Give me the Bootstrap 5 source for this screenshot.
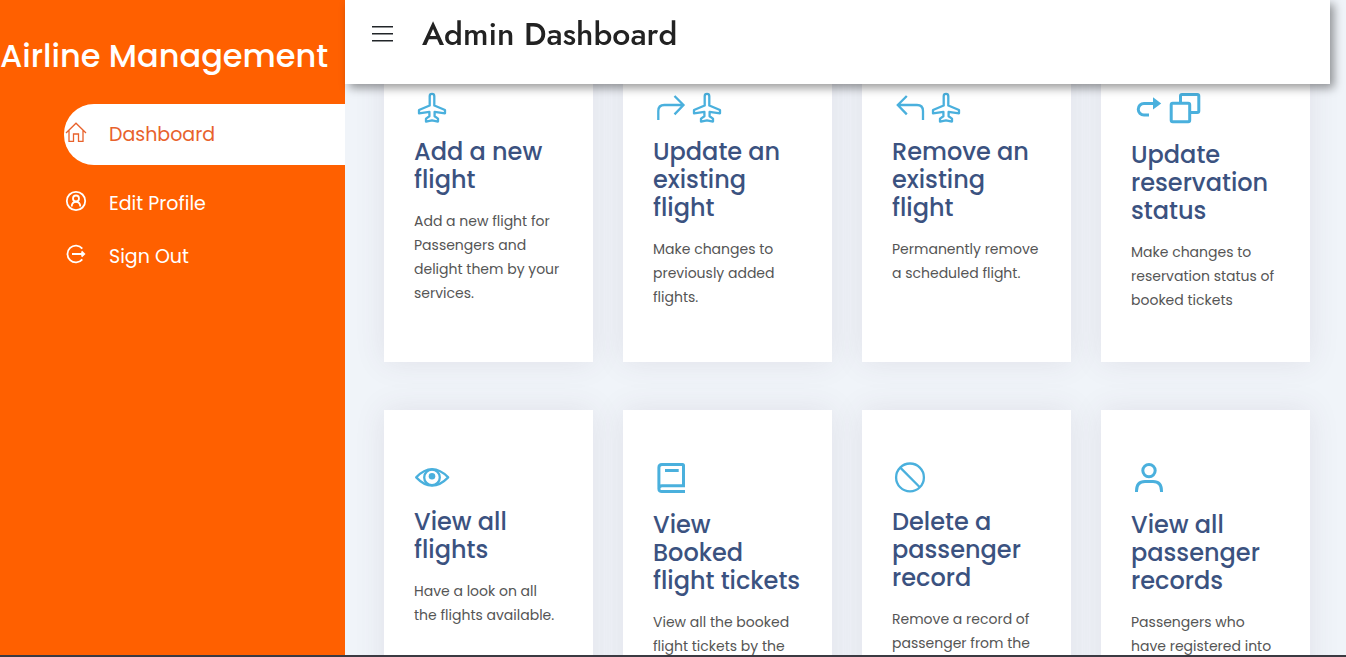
<!DOCTYPE html>
<html lang="en">
<head>
<meta charset="utf-8">
<meta name="viewport" content="width=device-width, initial-scale=1">
<title>Admin Dashboard</title>
<link rel="stylesheet" href="https://cdn.jsdelivr.net/npm/bootstrap@5.3.0/dist/css/bootstrap.min.css">
<style>
  :root { --brand: #ff6000; --side: 345px; }
  body { font-family: Poppins, Inter, "Open Sans", sans-serif; background: #f0f4f9; }
  svg { fill: none; stroke: currentColor; display: block; flex: none; }
  .sidebar { width: var(--side); background: var(--brand); padding-top: 32px; }
  .brand-name { font-size: 32px; line-height: 48px; font-weight: 500; white-space: nowrap; margin-bottom: 24px; }
  .side-menu { padding-left: 64px; }
  .side-menu .nav-link { color: #fff; font-size: 19px; line-height: 29px; padding: 12px 0 12px 1px; gap: 22px; }
  .side-menu .nav-link svg { margin-top: -6px; }
  .side-menu .nav-link.active { color: #e8622c; background: #fff; border-radius: 30px 0 0 30px; padding-top: 16px; padding-bottom: 16px; margin-bottom: 12px; }
  .topbar { left: var(--side); right: 16px; height: 84px; padding: 12px 26px; gap: 29px; box-shadow: 4px 4px 9px rgba(0, 0, 0, .4); z-index: 10; }
  .topbar h1 { font-family: Jost, Lato, sans-serif; font-size: 32px; line-height: 44px; font-weight: 500; color: #222; }
  .cards { padding: 40px 36px 0 39px; }
  .cards .row { --bs-gutter-x: 30px; --bs-gutter-y: 48px; }
  .tile { background: #fff; padding: 50px 0 50px 30px; box-shadow: 0 0 29px rgba(90, 55, 90, .1); white-space: nowrap; }
  .tile-icon { color: #4ab0dd; margin-bottom: 15px; }
  .tile h2 { font-size: 24px; line-height: 28px; font-weight: 500; margin-bottom: 15px; }
  .tile h2 a { color: #3b5280; text-decoration: none; }
  .tile p { font-size: 14px; line-height: 24px; color: #555; margin: 0; }
  .window-edge { height: 2px; background: #3b3a42; z-index: 20; }
</style>
</head>
<body>
<svg width="0" height="0" class="position-absolute" aria-hidden="true">
  <symbol id="plane" viewBox="0 0 36 33"><path stroke-width="2.3" stroke-linejoin="round" d="M15.7 6.200a2.300 2.300 0 0 1 4.600 0V15.500L31 20V23.300L20.600 21.800V26.200L24 28.600V31.600L18 30.400L12 31.600V28.600L15.400 26.200V21.800L5 23.300V20L15.700 15.500Z"/></symbol>
</svg>
<div class="d-flex vh-100 overflow-hidden">
  <aside class="sidebar flex-shrink-0 text-white">
    <div class="brand-name">Airline Management</div>
    <nav class="side-menu nav flex-column">
      <a class="nav-link active d-flex align-items-center" href="#" aria-current="page">
        <svg width="22" height="22" viewBox="0 0 22 22" stroke-width="1.3"><path d="M1 12L11 2.200L21 12M4 9.500V20.300H8.500V13H13.500V20.300H18V9.500"/></svg>Dashboard</a>
      <a class="nav-link d-flex align-items-center" href="#">
        <svg width="22" height="22" viewBox="0 0 22 22" stroke-width="1.8"><circle cx="11" cy="11" r="9.200"/><circle cx="11" cy="8.500" r="3"/><path d="M6.700 16.500C6.900 13.500 8.700 11.900 11 11.900S15.100 13.500 15.300 16.500"/></svg>Edit Profile</a>
      <a class="nav-link d-flex align-items-center" href="#">
        <svg width="22" height="22" viewBox="0 0 22 22" stroke-width="1.800"><path d="M17.300 5.600A8.400 8.400 0 1 0 17.300 16.400M7 11H19M16.500 8.500L19.200 11L16.500 13.500"/></svg>Sign Out</a>
    </nav>
  </aside>
  <header class="topbar position-fixed top-0 bg-white d-flex align-items-start">
    <button class="btn border-0 p-0 mt-2" type="button" aria-label="Toggle menu">
      <svg width="22" height="28" viewBox="0 0 22 28" stroke="#222" stroke-width="1.600"><path d="M1 6.800H22M1 13.800H22M1 20.800H22"/></svg>
    </button>
    <h1 class="m-0">Admin Dashboard</h1>
  </header>
  <main class="cards flex-grow-1">
    <div class="row row-cols-4">
      <div class="col"><article class="tile h-100">
        <div class="tile-icon d-flex"><svg width="36" height="33"><use href="#plane"/></svg></div>
        <h2><a href="#">Add a new<br>flight</a></h2>
        <p>Add a new flight for<br>Passengers and<br>delight them by your<br>services.</p>
      </article></div>
      <div class="col"><article class="tile h-100">
        <div class="tile-icon d-flex"><svg width="36" height="33" viewBox="0 0 36 33" stroke-width="2.300"><path d="M5.300 30V21Q5.300 15 11.300 15H30M21.500 6L30.500 15L21.500 24.400"/></svg><svg width="36" height="33"><use href="#plane"/></svg></div>
        <h2><a href="#">Update an<br>existing<br>flight</a></h2>
        <p>Make changes to<br>previously added<br>flights.</p>
      </article></div>
      <div class="col"><article class="tile h-100">
        <div class="tile-icon d-flex"><svg width="36" height="33" viewBox="0 0 36 33" stroke-width="2.300"><path d="M31 30V21Q31 15 25 15H6M14.800 6L5.800 15L14.800 24.400"/></svg><svg width="36" height="33"><use href="#plane"/></svg></div>
        <h2><a href="#">Remove an<br>existing<br>flight</a></h2>
        <p>Permanently remove<br>a scheduled flight.</p>
      </article></div>
      <div class="col"><article class="tile h-100">
        <div class="tile-icon d-flex"><svg width="36" height="36" viewBox="0 0 36 36" stroke-width="3"><path d="M23 13.500H13A5.750 5.750 0 0 0 13 25H18"/><path fill="currentColor" stroke="none" d="M22 7.300L30.200 13.400L22 19.400Z"/></svg><svg width="36" height="36" viewBox="0 0 36 36" stroke-width="3"><rect x="4.200" y="13.200" width="18.500" height="18.500" rx="1.500"/><path d="M13.500 13V6Q13.500 4.500 15 4.500H30.300Q31.800 4.500 31.800 6V21Q31.800 22.500 30.300 22.500H23"/></svg></div>
        <h2><a href="#">Update<br>reservation<br>status</a></h2>
        <p>Make changes to<br>reservation status of<br>booked tickets</p>
      </article></div>
      <div class="col"><article class="tile h-100">
        <div class="tile-icon d-flex"><svg width="36" height="33" viewBox="0 0 36 33" stroke-width="2.300"><path d="M2.200 17.400Q17.900 1 34.200 17.400Q17.900 34 2.200 17.400Z" stroke-linejoin="round"/><circle cx="18" cy="17.400" r="7.800"/><circle cx="18" cy="16.300" r="3.300" fill="currentColor" stroke="none"/></svg></div>
        <h2><a href="#">View all<br>flights</a></h2>
        <p>Have a look on all<br>the flights available.</p>
      </article></div>
      <div class="col"><article class="tile h-100">
        <div class="tile-icon d-flex"><svg width="36" height="36" viewBox="0 0 36 36" stroke-width="3"><path d="M5.900 29V7.500Q5.900 4.500 8.900 4.500H29.500Q30.500 4.500 30.500 5.500V25.700H9Q5.900 25.700 5.900 28.700T9 31.600H32M12 10.400H25.700"/></svg></div>
        <h2><a href="#">View<br>Booked<br>flight tickets</a></h2>
        <p>View all the booked<br>flight tickets by the</p>
      </article></div>
      <div class="col"><article class="tile h-100">
        <div class="tile-icon d-flex"><svg width="36" height="33" viewBox="0 0 36 33" stroke-width="2.300"><circle cx="18" cy="17.400" r="13.900"/><path d="M8.300 7.600L27.800 27.200"/></svg></div>
        <h2><a href="#">Delete a<br>passenger<br>record</a></h2>
        <p>Remove a record of<br>passenger from the</p>
      </article></div>
      <div class="col"><article class="tile h-100">
        <div class="tile-icon d-flex"><svg width="36" height="36" viewBox="0 0 36 36" stroke-width="3"><circle cx="18" cy="10.600" r="6.200"/><path d="M5.500 32V31Q5.500 21.600 14 21.600H22Q30.500 21.600 30.500 31V32"/></svg></div>
        <h2><a href="#">View all<br>passenger<br>records</a></h2>
        <p>Passengers who<br>have registered into</p>
      </article></div>
    </div>
  </main>
</div>
<div class="window-edge position-fixed bottom-0 start-0 end-0"></div>
<script src="https://cdn.jsdelivr.net/npm/bootstrap@5.3.0/dist/js/bootstrap.bundle.min.js"></script>
</body>
</html>
